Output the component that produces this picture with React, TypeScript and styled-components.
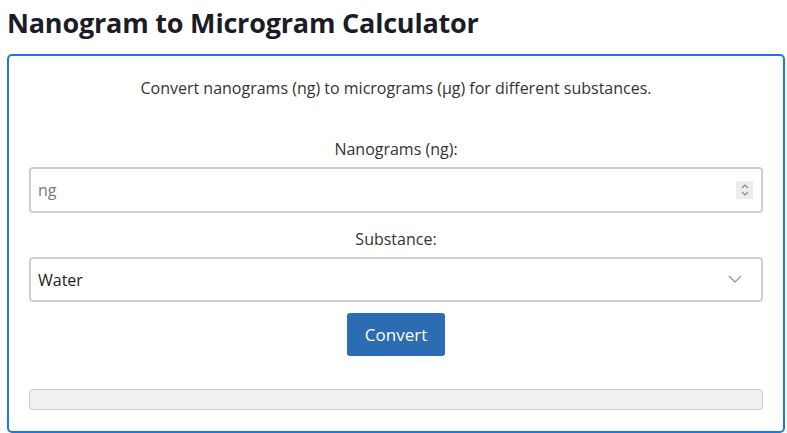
import React from 'react'
import { styled, createGlobalStyle } from 'styled-components'

const GlobalStyle = createGlobalStyle`
  * { box-sizing: border-box; }
  body {
    margin: 0;
    background: #ffffff;
    font-family: "Open Sans", "Noto Sans", sans-serif;
    color: #333333;
  }
`

const App = () => {
    return (
        <Page>
            <GlobalStyle />
            <Title>Nanogram to Microgram Calculator</Title>
            <Card>
                <Intro>Convert nanograms (ng) to micrograms (µg) for different substances.</Intro>
                <Label htmlFor="ng">Nanograms (ng):</Label>
                <FieldWrap>
                    <Input id="ng" type="number" placeholder="ng" />
                    <Spinner>
                        <svg width="10" height="14" viewBox="0 0 10 14">
                            <path d="M2 5 L5 2 L8 5" fill="none" stroke="#8a8a8a" strokeWidth="1.2" />
                            <path d="M2 9 L5 12 L8 9" fill="none" stroke="#8a8a8a" strokeWidth="1.2" />
                        </svg>
                    </Spinner>
                </FieldWrap>
                <Label htmlFor="substance" $top={14}>Substance:</Label>
                <FieldWrap>
                    <Select id="substance" defaultValue="water">
                        <option value="water">Water</option>
                        <option value="blood">Blood</option>
                        <option value="air">Air</option>
                    </Select>
                    <Chevron>
                        <svg width="16" height="10" viewBox="0 0 16 10">
                            <path d="M2 2 L8 8 L14 2" fill="none" stroke="#9a9a9a" strokeWidth="1.4" />
                        </svg>
                    </Chevron>
                </FieldWrap>
                <ButtonRow>
                    <Button type="button">Convert</Button>
                </ButtonRow>
                <Result />
            </Card>
        </Page>
    )
}

export default App

const Page = styled.div`
  padding: 6px 2px 1px 7px;
`
const Title = styled.h1`
  margin: 0 0 14px;
  font-size: 27px;
  line-height: 34px;
  font-weight: 700;
  color: #1c1c28;
  letter-spacing: -0.2px;
`
const Card = styled.div`
  border: 2px solid #1a7ae0;
  border-radius: 5px;
  padding: 20px 20px 21px;
  display: flex;
  flex-direction: column;
`
const Intro = styled.p`
  margin: 0 0 37px;
  text-align: center;
  font-size: 16px;
  line-height: 24px;
`
const Label = styled.label<{ $top?: number }>`
  display: block;
  margin: ${p => p.$top || 0}px 0 6px;
  text-align: center;
  font-size: 16px;
  line-height: 24px;
`
const FieldWrap = styled.div`
  position: relative;
`
const Input = styled.input`
  width: 100%;
  height: 46px;
  padding: 0 7px;
  border: 2px solid #cfcfcf;
  border-radius: 4px;
  font-family: inherit;
  font-size: 16px;
  color: #333;
  appearance: textfield;
  -moz-appearance: textfield;
  &::placeholder { color: #7a7a7a; }
  &::-webkit-inner-spin-button,
  &::-webkit-outer-spin-button { -webkit-appearance: none; margin: 0; }
`
const Spinner = styled.span`
  position: absolute;
  right: 10px;
  top: 14px;
  width: 17px;
  height: 18px;
  background: #ececec;
  display: flex;
  align-items: center;
  justify-content: center;
  pointer-events: none;
`
const Select = styled.select`
  width: 100%;
  height: 45px;
  padding: 0 7px;
  border: 2px solid #cfcfcf;
  border-radius: 4px;
  background: #fff;
  font-family: inherit;
  font-size: 16px;
  color: #222;
  appearance: none;
  -webkit-appearance: none;
`
const Chevron = styled.span`
  position: absolute;
  right: 20px;
  top: 17px;
  display: flex;
  pointer-events: none;
`
const ButtonRow = styled.div`
  display: flex;
  justify-content: center;
  margin: 11px 0 33px;
`
const Button = styled.button`
  width: 98px;
  height: 43px;
  border: none;
  border-radius: 3px;
  background: #2b6cb3;
  color: #ffffff;
  font-family: inherit;
  font-size: 17px;
  cursor: pointer;
`
const Result = styled.div`
  height: 21px;
  background: #f0f0f0;
  border: 1px solid #cccccc;
  border-radius: 4px;
`
